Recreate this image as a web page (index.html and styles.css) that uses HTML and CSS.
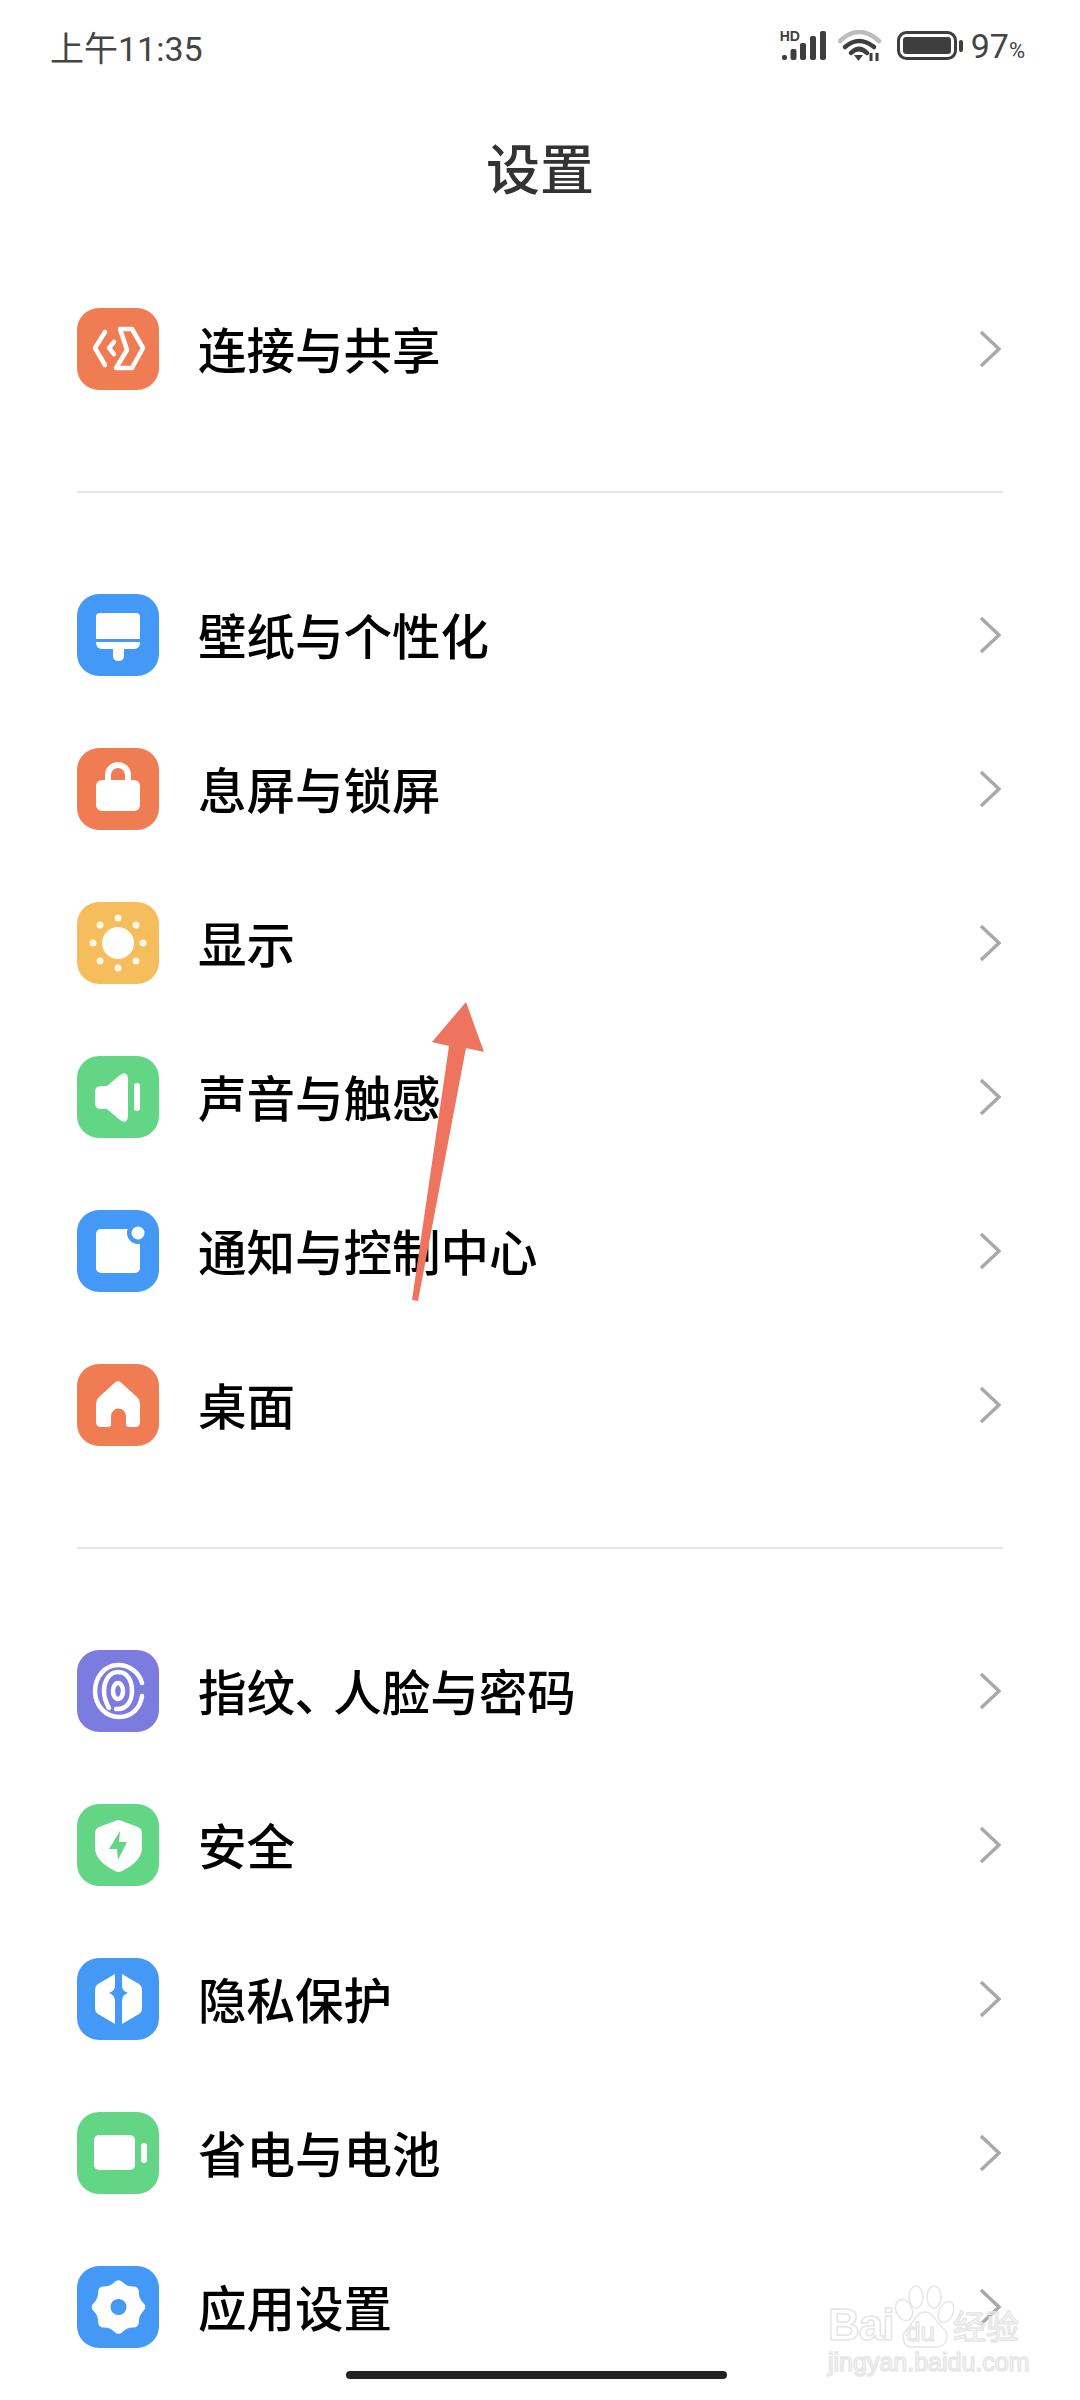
FILE: index.html
```html
<!DOCTYPE html>
<html lang="zh-CN">
<head>
  <meta charset="UTF-8" />
  <meta name="viewport" content="width=device-width, initial-scale=1" />
  <title>设置</title>
  <link rel="stylesheet" href="styles.css">
</head>
<body>

  <div class="status">
    <span class="time">上午11:35</span>
    <div class="status-icons">
      <div class="signal">
        <span class="hd">HD</span>
        <svg width="46" height="30" viewBox="0 0 46 30">
          <rect x="2" y="24" width="5" height="5" rx="2" />
          <rect x="10.500" y="18" width="6" height="11" rx="2" />
          <rect x="20" y="12" width="6" height="17" rx="2" />
          <rect x="30" y="5" width="6" height="24" rx="2" />
          <rect x="40" y="0" width="6" height="29" rx="2" />
        </svg>
      </div>
      <svg class="wifi" width="44" height="32" viewBox="0 0 44 32">
        <path d="M2 11Q21 -7 41 11" fill="none" stroke="#bdbdbd" stroke-width="4.500" stroke-linecap="round" />
        <path d="M7 17Q21 5 36 17" fill="none" stroke="#3e3e3e" stroke-width="4.500" stroke-linecap="round" />
        <path d="M13 23Q21 15 29 23" fill="none" stroke="#3e3e3e" stroke-width="4.500" stroke-linecap="round" />
        <path d="M16 25H25L20.500 31Z" fill="#3e3e3e" />
        <path d="M33 23V31M39 23V31" stroke="#3e3e3e" stroke-width="3" />
      </svg>
      <svg class="battery" width="66" height="30" viewBox="0 0 66 30">
        <rect x="1.500" y="1.500" width="57" height="26" rx="8" fill="none" stroke="#3e3e3e" stroke-width="3" />
        <rect x="6" y="6" width="48" height="17" rx="3" fill="#3e3e3e" />
        <rect x="62" y="9" width="4" height="12" rx="2" fill="#3e3e3e" />
      </svg>
      <span class="percent">97<small>%</small></span>
    </div>
  </div>

  <h1 class="title">设置</h1>

  <div class="group">
    <div class="row">
      <div class="tile orange">
        <svg viewBox="0 0 82 82">
          <path class="line" d="M28 24L18 40L28 57M37 34L32 40L37 46M43 21H55L66 40L55 60H39L50 42Z" />
        </svg>
      </div>
      <span class="label">连接与共享</span>
      <svg class="chevron" viewBox="0 0 22 38"><path d="M2 2L20 19L2 36" /></svg>
    </div>
  </div>

  <div class="divider"></div>

  <div class="group">
    <div class="row">
      <div class="tile blue">
        <svg viewBox="0 0 82 82">
          <path class="solid" d="M23 19H59Q63 19 63 23V45H19V23Q19 19 23 19Z" />
          <path class="solid" d="M19 48H63Q63 55 57 55H47V62Q47 67 41.500 67Q36 67 36 62V55H25Q19 55 19 48Z" />
        </svg>
      </div>
      <span class="label">壁纸与个性化</span>
      <svg class="chevron" viewBox="0 0 22 38"><path d="M2 2L20 19L2 36" /></svg>
    </div>
    <div class="row">
      <div class="tile orange">
        <svg viewBox="0 0 82 82">
          <path class="line wide" d="M31 33V27A10 10 0 0 1 51 27V33" />
          <rect class="solid" x="19" y="32" width="44" height="31" rx="6" />
        </svg>
      </div>
      <span class="label">息屏与锁屏</span>
      <svg class="chevron" viewBox="0 0 22 38"><path d="M2 2L20 19L2 36" /></svg>
    </div>
    <div class="row">
      <div class="tile yellow">
        <svg viewBox="0 0 82 82">
          <circle class="solid" cx="41" cy="41" r="16" />
          <g class="soft">
            <circle cx="41" cy="16" r="3.500" />
            <circle cx="59" cy="23" r="3.500" />
            <circle cx="66" cy="41" r="3.500" />
            <circle cx="59" cy="59" r="3.500" />
            <circle cx="41" cy="66" r="3.500" />
            <circle cx="23" cy="59" r="3.500" />
            <circle cx="16" cy="41" r="3.500" />
            <circle cx="23" cy="23" r="3.500" />
          </g>
        </svg>
      </div>
      <span class="label">显示</span>
      <svg class="chevron" viewBox="0 0 22 38"><path d="M2 2L20 19L2 36" /></svg>
    </div>
    <div class="row">
      <div class="tile green">
        <svg viewBox="0 0 82 82">
          <path class="solid" d="M24 30H30L43 19Q51 14 51 24V59Q51 69 43 64L30 53H24Q18 53 18 47V36Q18 30 24 30Z" />
          <rect class="solid" x="57" y="27" width="6" height="28" rx="3" />
        </svg>
      </div>
      <span class="label">声音与触感</span>
      <svg class="chevron" viewBox="0 0 22 38"><path d="M2 2L20 19L2 36" /></svg>
    </div>
    <div class="row">
      <div class="tile blue">
        <svg viewBox="0 0 82 82">
          <rect class="solid" x="19" y="19" width="44" height="44" rx="5" />
          <circle class="cut-blue" cx="61" cy="23" r="11" />
          <circle class="solid" cx="61" cy="23" r="6.500" />
        </svg>
      </div>
      <span class="label">通知与控制中心</span>
      <svg class="chevron" viewBox="0 0 22 38"><path d="M2 2L20 19L2 36" /></svg>
    </div>
    <div class="row">
      <div class="tile orange">
        <svg viewBox="0 0 82 82">
          <path class="solid" d="M38 18.500Q41 16 44 18.500L60 33Q63 36 63 40V58Q63 63 58 63H52Q49 63 49 60V52A7.500 7.500 0 0 0 34 52V60Q34 63 31 63H24Q19 63 19 58V40Q19 36 22 33Z" />
        </svg>
      </div>
      <span class="label">桌面</span>
      <svg class="chevron" viewBox="0 0 22 38"><path d="M2 2L20 19L2 36" /></svg>
    </div>
  </div>

  <div class="divider"></div>

  <div class="group">
    <div class="row">
      <div class="tile purple">
        <svg viewBox="0 0 82 82">
          <path class="line" d="M65 33C62 22 52 15 41 15C28 15 18 27 18 41C18 56 29 67 42 67C54 67 63 59 65 46" />
          <path class="line" d="M32 58C31 56 27 50 27 41C27 30 33 22 41 22C50 22 55 30 55 41C55 52 49 60 39 59" />
          <ellipse class="line" cx="41" cy="41" rx="5" ry="8" />
        </svg>
      </div>
      <span class="label">指纹<span class="punct">、</span>人脸与密码</span>
      <svg class="chevron" viewBox="0 0 22 38"><path d="M2 2L20 19L2 36" /></svg>
    </div>
    <div class="row">
      <div class="tile green">
        <svg viewBox="0 0 82 82">
          <path class="solid" d="M38 17Q41 15 45 17L61 23Q65 25 65 29V44Q65 57 45 67Q41 69 38 67Q18 57 18 44V29Q18 25 22 23Z" />
          <path class="cut-green" d="M43 27L32 45H40L41 56L50 38H42Z" />
        </svg>
      </div>
      <span class="label">安全</span>
      <svg class="chevron" viewBox="0 0 22 38"><path d="M2 2L20 19L2 36" /></svg>
    </div>
    <div class="row">
      <div class="tile blue">
        <svg viewBox="0 0 82 82">
          <path class="solid" d="M38 16L21 26Q18 28 18 31V51Q18 54 21 56L38 66V43Q38 37 32 35Q38 33 38 28Z" />
          <path class="solid" d="M45 16L62 26Q65 28 65 31V51Q65 54 62 56L45 66V43Q45 37 51 35Q45 33 45 28Z" />
        </svg>
      </div>
      <span class="label">隐私保护</span>
      <svg class="chevron" viewBox="0 0 22 38"><path d="M2 2L20 19L2 36" /></svg>
    </div>
    <div class="row">
      <div class="tile green">
        <svg viewBox="0 0 82 82">
          <rect class="solid" x="17" y="23" width="41" height="35" rx="5" />
          <rect class="solid" x="64" y="31" width="6" height="20" rx="3" />
        </svg>
      </div>
      <span class="label">省电与电池</span>
      <svg class="chevron" viewBox="0 0 22 38"><path d="M2 2L20 19L2 36" /></svg>
    </div>
    <div class="row">
      <div class="tile blue">
        <svg viewBox="0 0 82 82">
          <path class="solid" d="M66.160 45.210Q70.500 41 66.160 36.790Q61.830 32.580 61.910 26.530Q62 20.500 55.970 20.590Q49.920 20.670 45.710 16.340Q41.500 12 37.290 16.340Q33.080 20.670 27.030 20.590Q21 20.500 21.090 26.530Q21.170 32.580 16.840 36.790Q12.500 41 16.840 45.210Q21.170 49.420 21.090 55.470Q21 61.500 27.030 61.410Q33.080 61.330 37.290 65.660Q41.500 70 45.710 65.660Q49.920 61.330 55.970 61.410Q62 61.500 61.910 55.470Q61.830 49.420 66.160 45.210Z" />
          <circle class="cut-blue" cx="41.500" cy="41" r="8" />
        </svg>
      </div>
      <span class="label">应用设置</span>
      <svg class="chevron" viewBox="0 0 22 38"><path d="M2 2L20 19L2 36" /></svg>
    </div>
  </div>

  <!-- red arrow drawn over the screenshot -->
  <svg class="arrow" width="1080" height="2400" viewBox="0 0 1080 2400">
    <polygon points="466,1002 432,1042 449,1046 412,1300 418,1301 466,1048 484,1052" />
  </svg>

  <div class="watermark">
    <svg class="paw" width="60" height="70" viewBox="0 0 60 70">
      <ellipse cx="10" cy="25" rx="8" ry="11" transform="rotate(-25 10 25)" />
      <ellipse cx="22" cy="12" rx="7" ry="11" />
      <ellipse cx="40" cy="12" rx="7" ry="11" />
      <ellipse cx="52" cy="27" rx="7" ry="11" transform="rotate(25 52 27)" />
      <path d="M31 27C40 27 42 38 50 44C56 50 53 62 42 62H18C8 62 7 50 13 44C20 38 22 27 31 27Z" />
    </svg>
    <span class="wm-bai">Bai</span>
    <span class="wm-du">du</span>
    <span class="wm-cn">经验</span>
    <span class="wm-url">jingyan.baidu.com</span>
  </div>

  <div class="home-bar"></div>

</body>
</html>
```

FILE: styles.css
```css
html, body {
  height: 2400px;
}

body {
  margin: 0;
  position: relative;
  overflow: hidden;
  background: #fff;
  font-family: "Noto Sans CJK SC", "Noto Sans", sans-serif;
  color: #000;
}

.status {
  height: 92px;
  padding: 0 55px 0 50px;
  display: flex;
  justify-content: space-between;
  align-items: center;
  color: #444;
}

.time {
  font-size: 34px;
  font-family: Roboto, "Noto Sans CJK SC", sans-serif;
}

.status-icons {
  display: flex;
  align-items: center;
}

.signal {
  position: relative;
  height: 30px;
}

.signal svg {
  display: block;
  fill: #3e3e3e;
}

.hd {
  position: absolute;
  left: 0;
  top: -2px;
  font: bold 14px/14px "Liberation Sans", sans-serif;
  color: #3e3e3e;
}

.wifi {
  margin-left: 12px;
}

.battery {
  margin-left: 15px;
}

.percent {
  margin-left: 8px;
  font-size: 34px;
  font-family: Roboto, sans-serif;
}

.percent small {
  font-size: 22px;
}

.title {
  margin: 0 0 32px;
  height: 148px;
  display: flex;
  justify-content: center;
  align-items: center;
  font-size: 54px;
  font-weight: 500;
  color: #333;
}

.row {
  height: 154px;
  padding: 0 79px 0 77px;
  display: flex;
  align-items: center;
  gap: 39px;
}

.tile {
  width: 82px;
  height: 82px;
  border-radius: 22px;
  flex-shrink: 0;
}

.tile svg {
  display: block;
  width: 82px;
  height: 82px;
}

.orange { background: #f07c53; }
.blue { background: #4499f7; }
.yellow { background: #f6bd5c; }
.green { background: #62d684; }
.purple { background: #7c7ce0; }

.solid { fill: #fff; }
.soft { fill: #fff; opacity: 0.85; }
.cut-blue { fill: #4499f7; }
.cut-green { fill: #62d684; }

.line {
  fill: none;
  stroke: #fff;
  stroke-width: 4.5;
  stroke-linecap: round;
  stroke-linejoin: round;
}

.line.wide {
  stroke-width: 6;
  stroke-linecap: butt;
}

.label {
  font-size: 48.5px;
  line-height: 60px;
  font-weight: 500;
  position: relative;
  top: -1px;
}

.punct {
  font-feature-settings: "palt";
  margin-right: 14px;
}

.chevron {
  margin-left: auto;
  width: 22px;
  height: 38px;
  fill: none;
  stroke: #a9a9a9;
  stroke-width: 3.5;
}

.divider {
  height: 2px;
  margin: 65px 77px 65px;
  background: #e6e6e6;
}

.arrow {
  position: absolute;
  left: 0;
  top: 0;
  fill: #ef7460;
}

.watermark {
  position: absolute;
  left: 828px;
  top: 2285px;
  width: 192px;
  height: 92px;
  color: transparent;
  -webkit-text-stroke: 1.5px #e6e6e6;
  font-family: "Liberation Sans", sans-serif;
}

.watermark span {
  position: absolute;
  white-space: nowrap;
}

.paw {
  position: absolute;
  left: 66px;
  top: 0;
  fill: #fff;
  stroke: #e6e6e6;
  stroke-width: 1.5;
}

.wm-bai {
  left: 0;
  top: 14px;
  font-size: 44px;
  font-weight: bold;
  line-height: 52px;
  letter-spacing: -1px;
}

.wm-du {
  left: 78px;
  top: 32px;
  font-size: 26px;
  line-height: 30px;
}

.wm-cn {
  left: 125px;
  top: 18px;
  font-size: 33px;
  line-height: 44px;
  font-family: "Noto Sans CJK SC", sans-serif;
}

.wm-url {
  left: 0;
  top: 62px;
  font-size: 25px;
  line-height: 30px;
}

.home-bar {
  position: absolute;
  left: 346px;
  top: 2371px;
  width: 381px;
  height: 8px;
  border-radius: 4px;
  background: #222;
}
```
